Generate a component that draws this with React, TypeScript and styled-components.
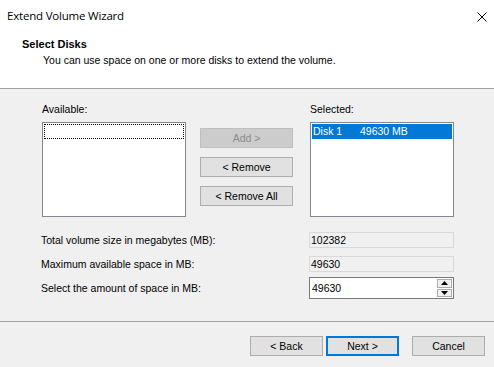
import React from "react";
import styled, { createGlobalStyle } from "styled-components";

const Global = createGlobalStyle`
  html, body { margin: 0; padding: 0; background: #f0f0f0; }
  body { font-family: "Liberation Sans", Arial, sans-serif; font-size: 10.5px; color: #000; }
  * { box-sizing: border-box; }
`;

const Window = styled.div`
  width: 494px;
  height: 367px;
  display: flex;
  flex-direction: column;
  background: #f0f0f0;
  overflow: hidden;
`;

const Header = styled.div`
  height: 89px;
  background: #fff;
  border-bottom: 1px solid #a0a0a0;
  display: flex;
  flex-direction: column;
`;

const TitleBar = styled.div`
  height: 38px;
  display: flex;
  align-items: flex-start;
  justify-content: space-between;
  padding: 8px 7px 0 7px;
`;

const TitleText = styled.div`
  font-family: "Segoe UI", "Open Sans", "Noto Sans", sans-serif;
  font-size: 11.5px;
  line-height: 16px;
  letter-spacing: -0.2px;
`;

const CloseBtn = styled.div`
  width: 10px;
  height: 10px;
  margin-top: 4px;
  display: flex;
`;

const SectionTitle = styled.div`
  font-weight: bold;
  font-size: 11px;
  line-height: 13px;
  padding-left: 22px;
`;

const SectionSub = styled.div`
  line-height: 13px;
  padding-left: 43px;
  margin-top: 3px;
`;

const Body = styled.div`
  flex: 1;
  padding: 14px 0 0 42px;
  display: flex;
  flex-direction: column;
`;

const Lists = styled.div`
  display: grid;
  grid-template-columns: 144px 93px 144px;
  column-gap: 14px;
  align-items: start;
`;

const Column = styled.div<{ $shift?: number }>`
  display: flex;
  flex-direction: column;
  margin-left: ${(p) => p.$shift ?? 0}px;
`;

const Label = styled.div`
  line-height: 13px;
  height: 13px;
  margin-bottom: 6px;
`;

const ListBox = styled.div`
  width: 144px;
  height: 95px;
  background: #fff;
  border: 1px solid #828790;
  padding: 1px;
`;

const FocusRow = styled.div`
  height: 15px;
  border: 1px dotted #000;
`;

const SelectedRow = styled.div`
  height: 15px;
  background: #0078d7;
  color: #fff;
  display: flex;
  align-items: center;
  padding-left: 1px;
  line-height: 13px;
`;

const Cell = styled.span<{ $w?: number }>`
  display: inline-block;
  width: ${(p) => (p.$w ? `${p.$w}px` : "auto")};
`;

const ButtonStack = styled.div`
  display: flex;
  flex-direction: column;
  gap: 9px;
  padding-top: 25px;
`;

const Button = styled.button<{ $w?: number; $default?: boolean }>`
  width: ${(p) => p.$w ?? 93}px;
  height: 20px;
  margin: 0;
  padding: 0;
  font-family: "Liberation Sans", Arial, sans-serif;
  font-size: 10.5px;
  color: #000;
  background: #e1e1e1;
  border: 1px solid #adadad;
  ${(p) => p.$default && `border: 2px solid #0078d7;`}
  &:disabled {
    background: #cccccc;
    border-color: #bfbfbf;
    color: #8a8a8a;
  }
`;

const Fields = styled.div`
  display: flex;
  flex-direction: column;
  margin-top: 15px;
  width: 412px;
`;

const FieldRow = styled.div<{ $mt?: number }>`
  display: flex;
  align-items: center;
  justify-content: space-between;
  margin-top: ${(p) => p.$mt ?? 0}px;
`;

const FieldLabel = styled.div`
  line-height: 13px;
  margin-left: -1px;
`;

const ReadOnlyBox = styled.div`
  width: 145px;
  height: 16px;
  background: #f0f0f0;
  border: 1px solid #dadada;
  line-height: 14px;
  padding-left: 1px;
  color: #000;
`;

const SpinBox = styled.div`
  width: 145px;
  height: 22px;
  background: #fff;
  border: 1px solid #7a7a7a;
  display: flex;
  align-items: center;
  justify-content: space-between;
  padding: 1px 1px 1px 2px;
`;

const SpinValue = styled.div`
  line-height: 13px;
`;

const SpinButtons = styled.div`
  display: flex;
  flex-direction: column;
  gap: 1px;
  height: 18px;
`;

const SpinButton = styled.div`
  width: 15px;
  height: 9px;
  background: #f0f0f0;
  border: 1px solid #adadad;
  display: flex;
  align-items: center;
  justify-content: center;
`;

const Footer = styled.div`
  height: 46px;
  border-top: 1px solid #a0a0a0;
  display: flex;
  justify-content: flex-end;
  padding: 14px 9px 0 0;
  gap: 3px;
`;

const CancelGap = styled.div`
  width: 7px;
`;

const Tri = ({ up }: { up?: boolean }) => (
  <svg width="7" height="4" viewBox="0 0 7 4">
    {up ? <polygon points="0,4 7,4 3.5,0" fill="#000" /> : <polygon points="0,0 7,0 3.5,4" fill="#000" />}
  </svg>
);

export default function App() {
  return (
    <Window>
      <Global />
      <Header>
        <TitleBar>
          <TitleText>Extend Volume Wizard</TitleText>
          <CloseBtn>
            <svg width="10" height="10" viewBox="0 0 10 10">
              <path d="M0.5 0.5 L9.5 9.5 M9.5 0.5 L0.5 9.5" stroke="#000" strokeWidth="1" />
            </svg>
          </CloseBtn>
        </TitleBar>
        <SectionTitle>Select Disks</SectionTitle>
        <SectionSub>You can use space on one or more disks to extend the volume.</SectionSub>
      </Header>
      <Body>
        <Lists>
          <Column>
            <Label>Available:</Label>
            <ListBox>
              <FocusRow />
            </ListBox>
          </Column>
          <ButtonStack>
            <Button disabled>Add &gt;</Button>
            <Button>&lt; Remove</Button>
            <Button>&lt; Remove All</Button>
          </ButtonStack>
          <Column $shift={3}>
            <Label>Selected:</Label>
            <ListBox>
              <SelectedRow>
                <Cell $w={47}>Disk 1</Cell>
                <Cell>49630 MB</Cell>
              </SelectedRow>
            </ListBox>
          </Column>
        </Lists>
        <Fields>
          <FieldRow>
            <FieldLabel>Total volume size in megabytes (MB):</FieldLabel>
            <ReadOnlyBox>102382</ReadOnlyBox>
          </FieldRow>
          <FieldRow $mt={8}>
            <FieldLabel>Maximum available space in MB:</FieldLabel>
            <ReadOnlyBox>49630</ReadOnlyBox>
          </FieldRow>
          <FieldRow $mt={5}>
            <FieldLabel>Select the amount of space in MB:</FieldLabel>
            <SpinBox>
              <SpinValue>49630</SpinValue>
              <SpinButtons>
                <SpinButton>
                  <Tri up />
                </SpinButton>
                <SpinButton>
                  <Tri />
                </SpinButton>
              </SpinButtons>
            </SpinBox>
          </FieldRow>
        </Fields>
      </Body>
      <Footer>
        <Button $w={73}>&lt; Back</Button>
        <Button $w={73} $default>
          Next &gt;
        </Button>
        <CancelGap />
        <Button $w={73}>Cancel</Button>
      </Footer>
    </Window>
  );
}
